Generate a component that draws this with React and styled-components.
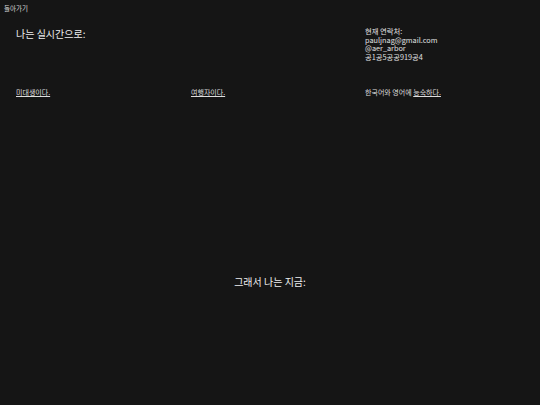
import React from 'react';
import styled, { createGlobalStyle } from 'styled-components';

const GlobalStyle = createGlobalStyle`
  html, body {
    margin: 0;
    padding: 0;
    background-color: #151515;
  }
  body {
    font-family: "Noto Sans CJK KR", "Noto Sans", sans-serif;
    color: #e6e6e6;
  }
`;

const Page = styled.main`
  width: 540px;
  height: 405px;
  background-color: #151515;
  display: flex;
  flex-direction: column;
`;

const BackLink = styled.a`
  display: block;
  padding: 3px 4px 0;
  font-size: 6.5px;
  line-height: 10px;
  color: #d8d8d8;
  text-decoration: none;
  cursor: pointer;
`;

const Grid = styled.section`
  display: grid;
  grid-template-columns: 175px 174px 175px;
  padding: 0 0 0 16px;
`;

const TopRow = styled(Grid)`
  margin-top: 14px;
  height: 50px;
`;

const BottomRow = styled(Grid)`
  margin-top: 10px;
`;

const Title = styled.h2`
  margin: 0;
  font-size: 10px;
  line-height: 13px;
  font-weight: 400;
  color: #eeeeee;
  grid-column: ${(p) => p.$col || 'auto'};
`;

const Contact = styled.div`
  grid-column: 3;
  display: flex;
  flex-direction: column;
  font-size: 7.3px;
  line-height: 8.7px;
  color: #e2e2e2;
  padding-top: 0;
`;

const Fact = styled.p`
  margin: 0;
  font-size: 7px;
  line-height: 10px;
  color: #dedede;
`;

const Under = styled.span`
  text-decoration: underline;
  text-underline-offset: 1px;
`;

const Now = styled.h2`
  margin: 178px 0 0;
  text-align: center;
  font-size: 10px;
  line-height: 13px;
  font-weight: 400;
  color: #eeeeee;
`;

const App = () => {
  return (
    <>
      <GlobalStyle />
      <Page>
        <BackLink>돌아가기</BackLink>
        <TopRow>
          <Title $col="1">나는 실시간으로:</Title>
          <Contact>
            <span>현재 연락처:</span>
            <span>pauljnag@gmail.com</span>
            <span>@aer_arbor</span>
            <span>공1공5공공919공4</span>
          </Contact>
        </TopRow>
        <BottomRow>
          <Fact>
            <Under>미대생이다.</Under>
          </Fact>
          <Fact>
            <Under>여행자이다.</Under>
          </Fact>
          <Fact>
            한국어와 영어에 <Under>능숙하다.</Under>
          </Fact>
        </BottomRow>
        <Now>그래서 나는 지금:</Now>
      </Page>
    </>
  );
};

export default App;
